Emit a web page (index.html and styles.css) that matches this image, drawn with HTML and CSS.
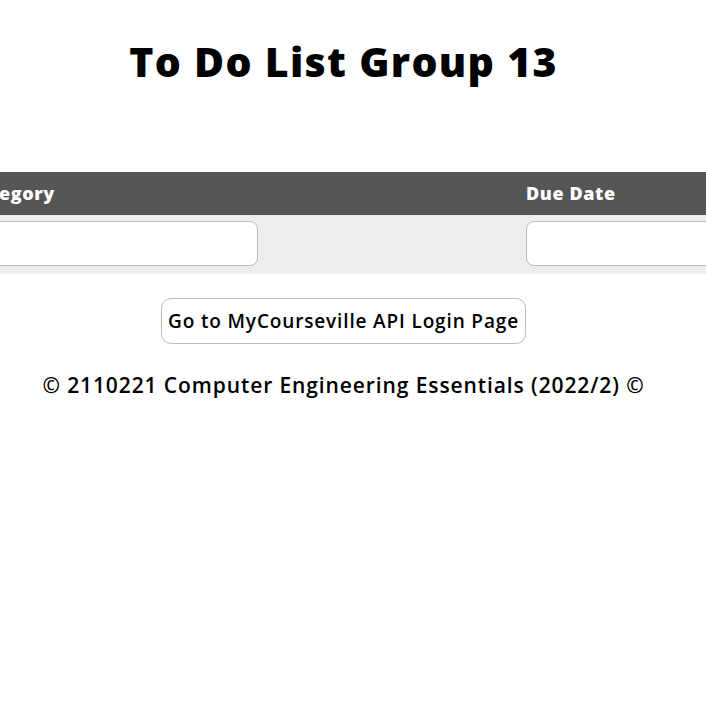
FILE: index.html
```html
<!DOCTYPE html>
<html>
<head>
<meta charset="utf-8">
<link rel="stylesheet" href="styles.css">
<title>To Do List Group 13</title>
</head>
<body>
<h1 class="title page">To Do List Group 13</h1>
<div class="table-wrap">
  <div class="todo-table">
    <div class="cell head">Title</div>
    <div class="cell head">Category</div>
    <div class="cell head"></div>
    <div class="cell head">Due Date</div>
    <div class="cell head">Action</div>
    <div class="cell body"><input class="field" type="text"></div>
    <div class="cell body"><input class="field field-wide" type="text"></div>
    <div class="cell body"></div>
    <div class="cell body"><input class="field" type="text"></div>
    <div class="cell body"></div>
  </div>
</div>
<div class="actions page">
  <button class="login-btn">Go to MyCourseville API Login Page</button>
</div>
<p class="footer page">© 2110221 Computer Engineering Essentials (2022/2) ©</p>
</body>
</html>
```
FILE: styles.css
```css
html, body {
  margin: 0;
  padding: 0;
  background: #fff;
  overflow: hidden;
}
body {
  font-family: "Open Sans", Lato, sans-serif;
  color: #000;
}
.page {
  width: 687px;
}
.title {
  margin: 0;
  padding-top: 34px;
  height: 172px;
  box-sizing: border-box;
  text-align: center;
  font-size: 41px;
  font-weight: 800;
  line-height: 54px;
  letter-spacing: 1.3px;
}
.table-wrap {
  display: flex;
  justify-content: center;
  width: 706px;
}
.todo-table {
  flex: none;
  display: grid;
  grid-template-columns: 295px 305px 255px 277.5px 247.5px;
  width: 1380px;
}
.cell {
  padding-left: 8px;
  min-width: 0;
}
.head {
  background: #555;
  color: #fff;
  font-weight: 800;
  font-size: 18px;
  letter-spacing: 0.6px;
  height: 43px;
  line-height: 43px;
}
.body {
  background: #eee;
  padding-top: 6px;
  padding-bottom: 8px;
  height: 59px;
  box-sizing: border-box;
}
.field {
  display: block;
  width: 287px;
  height: 45px;
  box-sizing: border-box;
  border: 1px solid #bbb;
  border-radius: 8px;
  background: #fff;
  margin: 0;
}
.field-wide {
  width: 292px;
}
.actions {
  display: flex;
  justify-content: center;
  padding-top: 24px;
}
.login-btn {
  font-family: inherit;
  font-size: 19px;
  font-weight: 600;
  letter-spacing: 0.85px;
  color: #000;
  background: #fff;
  border: 1px solid #bbb;
  border-radius: 10px;
  height: 46px;
  padding: 0 4px;
  width: 365px;
}
.footer {
  margin: 0;
  padding-top: 24px;
  text-align: center;
  font-size: 21px;
  font-weight: 600;
  letter-spacing: 0.9px;
  line-height: 34px;
}
```
